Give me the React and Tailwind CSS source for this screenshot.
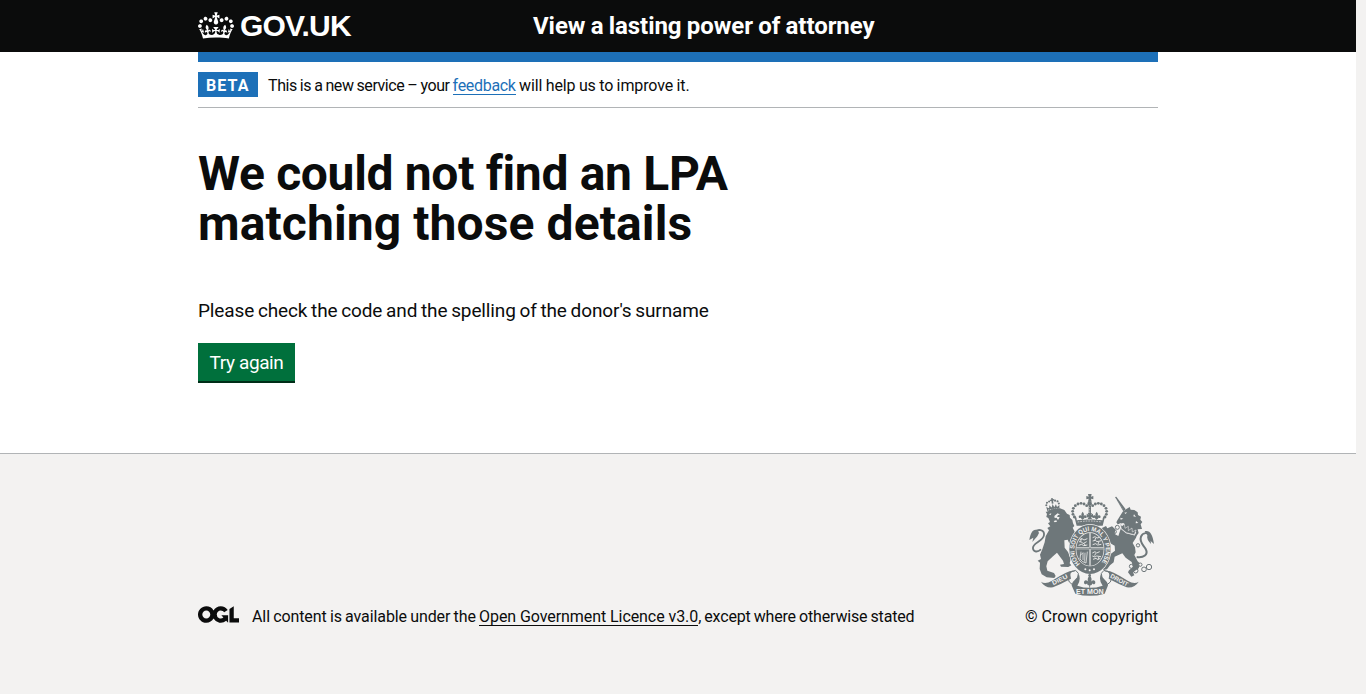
function Crown() {
  return (
    <svg aria-hidden="true" viewBox="0 0 132 97" className="mt-px h-[27px] w-9 shrink-0 fill-current">
      <path d="M25 30.2c3.5 1.5 7.7-.2 9.1-3.7 1.5-3.6-.2-7.8-3.9-9.2-3.6-1.4-7.6.3-9.1 3.9-1.4 3.5.3 7.5 3.9 9zM9 39.5c3.6 1.5 7.8-.2 9.2-3.7 1.5-3.6-.2-7.8-3.9-9.1-3.6-1.5-7.6.2-9.1 3.8-1.4 3.5.3 7.5 3.8 9zM4.4 57.2c3.5 1.5 7.7-.2 9.1-3.8 1.5-3.6-.2-7.7-3.9-9.1-3.5-1.5-7.6.3-9.1 3.8-1.4 3.5.3 7.6 3.9 9.1zm38.3-21.4c3.5 1.5 7.7-.2 9.1-3.8 1.5-3.6-.2-7.7-3.9-9.1-3.6-1.5-7.6.3-9.1 3.8-1.3 3.6.4 7.7 3.9 9.1zm64.4-5.6c-3.6 1.5-7.8-.2-9.1-3.7-1.5-3.6.2-7.8 3.8-9.2 3.6-1.4 7.7.3 9.2 3.9 1.3 3.5-.4 7.5-3.9 9zm15.9 9.3c-3.6 1.5-7.7-.2-9.1-3.7-1.5-3.6.2-7.8 3.7-9.1 3.6-1.5 7.7.2 9.2 3.8 1.5 3.5-.3 7.5-3.8 9zm4.7 17.7c-3.6 1.5-7.8-.2-9.2-3.8-1.5-3.6.2-7.7 3.9-9.1 3.6-1.5 7.7.3 9.2 3.8 1.3 3.5-.4 7.6-3.9 9.1zM89.3 35.8c-3.6 1.5-7.8-.2-9.2-3.8-1.4-3.6.2-7.7 3.9-9.1 3.6-1.5 7.7.3 9.2 3.8 1.4 3.6-.3 7.7-3.9 9.1zM69.7 17.7l8.9 4.7V9.3l-8.9 2.8c-.2-.3-.5-.6-.9-.9L72.4 0H59.6l3.5 11.2c-.3.3-.6.5-.9.9l-8.8-2.8v13.1l8.8-4.7c.3.3.6.7.9.9l-5 15.4v.1c-.2.8-.4 1.6-.4 2.4 0 4.1 3.1 7.5 7 8.1h.2c.3 0 .7.1 1 .1.4 0 .7 0 1-.1h.2c4-.6 7.1-4.1 7.1-8.1 0-.8-.1-1.7-.4-2.4V34l-5.1-15.4c.4-.2.7-.6 1-.9zM66 92.8c16.9 0 32.8 1.1 47.1 3.2 4-16.9 8.9-26.7 14-33.5l-9.6-3.4c1 4.9 1.1 7.2 0 10.2-1.5-1.4-3-4.3-4.2-8.7L108.6 76c2.8-2 5-3.2 7.5-3.3-4.4 9.4-10 11.9-13.6 11.2-4.3-.8-6.3-4.6-5.6-7.9 1-4.7 5.7-5.9 8-.5 4.3-8.7-3-11.4-7.6-8.8 7.1-7.2 7.9-13.5 2.1-21.1-8 6.1-8.1 12.3-4.5 20.8-4.7-5.4-12.1-2.5-9.5 6.2 3.4-5.2 7.9-2 7.2 3.1-.6 4.3-6.4 7.8-13.5 7.2-10.3-.9-10.9-8-11.2-13.8 2.5-.5 7.1 1.8 11 7.3L80.2 60c-4.1 4.4-8 5.3-12.3 5.4 1.4-4.4 8-11.6 8-11.6H55.5s6.4 7.2 7.9 11.6c-4.2-.1-8-1-12.3-5.4l1.4 16.4c3.9-5.5 8.5-7.7 10.9-7.3-.3 5.8-.9 12.8-11.1 13.8-7.2.6-12.9-2.9-13.5-7.2-.7-5 3.8-8.3 7.1-3.1 2.7-8.7-4.6-11.6-9.4-6.2 3.7-8.5 3.6-14.7-4.6-20.8-5.8 7.6-5 13.9 2.2 21.1-4.7-2.6-11.9.1-7.7 8.8 2.3-5.5 7.1-4.2 8.1.5.7 3.3-1.3 7.1-5.7 7.9-3.5.7-9-1.8-13.5-11.2 2.5.1 4.7 1.3 7.5 3.3l-4.7-15.4c-1.2 4.4-2.7 7.2-4.3 8.7-1.1-3-.9-5.3 0-10.2l-9.5 3.4c5 6.9 9.9 16.7 14 33.5 14.8-2.1 30.8-3.2 47.7-3.2z" />
    </svg>
  );
}

function LicenceLogo() {
  return (
    <svg aria-hidden="true" viewBox="0 0 483.2 195.7" className="mb-0.5 h-[17px] w-[41px] shrink-0 fill-current">
      <path d="M421.5 142.8V.1l-50.7 32.3v161.1h112.4v-50.7zm-122.3-9.6A47.12 47.12 0 0 1 221 97.8c0-26 21.1-47.1 47.1-47.1 16.7 0 31.4 8.7 39.7 21.8l42.7-27.2A97.63 97.63 0 0 0 268.1 0c-36.5 0-68.3 20.1-85.1 49.7A98 98 0 0 0 97.8 0C43.9 0 0 43.9 0 97.8s43.9 97.8 97.8 97.8c36.5 0 68.3-20.1 85.1-49.7a97.76 97.76 0 0 0 149.6 25.4l19.4 22.2h3v-87.8h-80l24.3 27.5zM97.8 145c-26 0-47.1-21.1-47.1-47.1s21.1-47.1 47.1-47.1 47.1 21.1 47.1 47.1S123.8 145 97.8 145" />
    </svg>
  );
}

function Fleur({ x, y, s = 1 }) {
  return (
    <g transform={`translate(${x} ${y}) scale(${s})`}>
      <path d="M0-12C6-5 5 0 2 5c4-8 12-6 11 1-1 4-6 4-7 1 0 4-3 5-5 5v5h-2v-5c-2 0-5-1-5-5-1 3-6 3-7-1C-14-1-6-3-2 5-5 0-6-5 0-12z" />
    </g>
  );
}

const pearls = [
  [178, 96], [174, 88], [173, 79], [175, 70], [181, 62], [189, 57], [198, 55], [207, 57], [215, 62],
  [270, 96], [274, 88], [275, 79], [273, 70], [267, 62], [259, 57], [250, 55], [241, 57], [233, 62],
];

function RoyalArms() {
  const dark = "#6e777a";
  const light = "#f3f2f1";
  return (
    <svg aria-hidden="true" viewBox="42 27 375 306" className="h-[102px] w-[125px]" fill={dark}>
      {/* lion: crown */}
      <g transform="rotate(-8 113 60)">
        <path d="M95 78l-2-15 8 5 2-9 6 8 4-10 4 10 6-8 2 9 8-5-2 15z" />
        <g>
          <circle cx="94" cy="58" r="3.2" />
          <circle cx="97" cy="51" r="3.2" />
          <circle cx="104" cy="48" r="3.2" />
          <circle cx="122" cy="48" r="3.2" />
          <circle cx="129" cy="51" r="3.2" />
          <circle cx="132" cy="58" r="3.2" />
        </g>
        <path d="M111 39h5v17h-5zM107 43h13v4h-13z" />
        <path d="M97 73h32" stroke={light} strokeWidth="2" strokeDasharray="4 2" />
      </g>
      {/* lion: head, mane and body */}
      <path d="M97 80l14-7 24-3 13 5 8 11 8 4 1 8 7 7 2 10 4 8-5 5 8 16-4 8 7 9-8 4 7 13-6 9-10-3-9-20-10 2 1 22 10 13 8 21-3 13 5 6-9 5-22-1-3-6 12-2-3-10-18-24-12 11-16 15-4 15 3 13 20 7 5 9-4 6-23-2-15-9-6-16 1-19-7-6 10-5-3-13 7-16 7-21 3-18 10-18-5-7 9-5-7-9 6-4-5-12-6-3 2-9-4-7z" />
      <path d="M118 93l10-8 7 4-6 1-3 5 8 2-5 8-4-7-6 1z M101 88l8-3-2 5z" fill={light} />
      <path d="M116 108l8-2 2 4-7 2z" fill={light} />
      {/* lion: tail */}
      <path d="M78 193c-11 10-22 8-24-2-4-18 31-21 33-41 2-17-20-19-28-8" fill="none" stroke={dark} strokeWidth="5.5" />
      <path d="M69 137c-13-8-22 4-26 28l12-7-3 13 15-17 5-10z" />
      {/* unicorn: horn, head and body */}
      <path d="M300 36l4-1 28 38-7 6z" />
      <path d="M303 42l22 31" stroke={light} strokeWidth="1.2" strokeDasharray="2 5" />
      <path d="M323 80l10-7 11-7 3 8 11 1 10 7 1 8 9 5-2 9 6 7-5 7 4 14-13 1 3 11-6 8-11-5-14-3-10-7-5-8 3-12-3-3-17 4-4-6 4-8z" />
      <path d="M328 83l8-1-4 5z M316 98l9 3-8 3z M357 88l6 8-8-2z M363 108l7 6-8 1z" fill={light} />
      <path d="M318 129l19 8 29 12-3 9-10 16 7 13 2 15-4 8 10 19 8 7-5 14-17 12 4 9-9 4-10-13 3-6 12-10-4-15-18-13-10-13-23 10-3 17-11 9-9 12-10 2-6-8 12-8 6-10 2-17 20-15-1-15-13-7-15 3-4-10 10-18-12-6-4-15 12-6 4 7 14-6 10 9-2 14 11 6z" />
      {/* unicorn: coronet collar and chain */}
      <path d="M316 119l5 13 13 11 24 6 4-8" fill="none" stroke={light} strokeWidth="4" />
      <path d="M315 114l6 9 7-6 2 13 10-6 0 13 11-8 1 12 11-6-5 14-24-6-15-12z" stroke={light} strokeWidth="1.6" />
      <g fill="none" stroke={dark} strokeWidth="3">
        <circle cx="307" cy="127" r="6" />
        <circle cx="298" cy="140" r="6" />
        <circle cx="369" cy="181" r="5" fill={light} />
        <circle cx="349" cy="244" r="6" />
        <circle cx="362" cy="257" r="7" />
        <circle cx="376" cy="239" r="5" fill={light} />
        <circle cx="387" cy="253" r="7" />
        <circle cx="402" cy="246" r="8" />
      </g>
      {/* unicorn: tail */}
      <path d="M365 216c21 3 36-7 27-24-7-12-20-21-14-37 5-13 21-14 28-4" fill="none" stroke={dark} strokeWidth="6" />
      <path d="M389 139c14-5 24 8 28 38l-10-9 1 9c-9-8-13-17-11-26z" />

      {/* royal crown */}
      {pearls.map(([x, y]) => (
        <circle key={`${x}-${y}`} cx={x} cy={y} r="4.3" />
      ))}
      <path d="M219 27h11l-2 8 7-2v10l-7-2 2 9h-11l2-9-7 2V33l7 2z" />
      <circle cx="224" cy="56" r="7" />
      <path d="M221 63h7v25h-7z" />
      <path d="M224 67v20" stroke={light} strokeWidth="2" strokeDasharray="2 3" />
      <Fleur x={203} y={91} s={0.9} />
      <Fleur x={245} y={91} s={0.9} />
      <path d="M218 84h13l-3 5 6-3v12l-6-3 3 7h-13l3-7-6 3V86l6 3z" />
      <path d="M177 91c10 5 8 15 8 15s35-6 78 0c0 0-2-10 8-15l-8 31h-78z" />
      <path d="M188 111q36-6 72 0" fill="none" stroke={light} strokeWidth="2" strokeDasharray="5 3" />

      {/* garter and quartered shield */}
      <ellipse cx="225" cy="193" rx="64" ry="76" fill={light} />
      <ellipse cx="225" cy="193" rx="62" ry="74" />
      <ellipse cx="225" cy="193" rx="43" ry="51" fill={light} />
      <ellipse cx="225" cy="193" rx="41" ry="49" />
      <path id="garter-motto" d="M195 237A47 56 0 1 1 255 237" fill="none" />
      <text fill={light} className="font-['Liberation_Sans'] text-[19px] font-bold">
        <textPath href="#garter-motto" textLength="250" lengthAdjust="spacingAndGlyphs">HONI SOIT QUI MAL Y PENSE</textPath>
      </text>
      <path d="M225 144v98M184 190h82" stroke={light} strokeWidth="6" />
      <path d="M225 144v98M184 190h82" stroke={dark} strokeWidth="2.5" />
      <g fill="none" stroke={light} strokeWidth="2.6">
        <path d="M194 164l7-3 6 4 10-4M192 170l8 1 4 5 11-6M191 181l9-3 6 4 11-2M199 160l-2 10M208 176l3 7" />
        <path d="M232 204l8-4 5 4 9-4M232 213l8 3 5-3 13 2M234 223l9-3 5 4 8-4M242 205l-3 7M252 215l-3 8" />
        <path d="M233 158l7-3 6 4 8-2M233 168l8-2 5 4 13-3M233 179l9-3 6 4 11-2M242 159l-3 8M252 170l-3 7" />
        <path d="M198 200l-3 22q7 10 18 12l4-34M204 203v22M210 203l-1 27M196 211l8-8" strokeWidth="2.2" />
      </g>
      <g fill={light}>
        <circle cx="211" cy="253" r="3" />
        <circle cx="224" cy="256" r="3" />
        <circle cx="237" cy="253" r="3" />
      </g>

      {/* scroll */}
      <path d="M161 268l6-8 15-4 8 9-2 13-9 12-5 10-11-9-4-11z" fill={light} stroke={dark} strokeWidth="3" />
      <path d="M288 268l-6-8-15-4-8 9 2 13 9 12 5 10 11-9 4-11z" fill={light} stroke={dark} strokeWidth="3" />
      <path d="M78 290q13 9 33-3 23-15 42-24 20-10 29-3-22-2-14 21l-6 3q-26 14-48 23-24 3-36-17z" />
      <path d="M371 290q-13 9-33-3-23-15-42-24-20-10-29-3 22-2 14 21l6 3q26 14 48 23 24 3 36-17z" />
      <path d="M171 304q-4-9 8-19 11-9 12-19 8 18-4 36 37 13 76 0-13-17-5-36 1 10 12 19 12 10 8 19l-9 22q-44 13-88 0z" />
      <Fleur x={224} y={286} s={1.3} />
      <circle cx="224" cy="271" r="4" />
      <g fill={light} className="font-['Liberation_Sans'] text-[18px] font-bold">
        <text transform="translate(115 301) rotate(-27)" textLength="50" lengthAdjust="spacingAndGlyphs">DIEU</text>
        <text transform="translate(284 277) rotate(28)" textLength="59" lengthAdjust="spacingAndGlyphs">DROIT</text>
        <text x="183" y="326" textLength="83" lengthAdjust="spacingAndGlyphs" className="text-[19px]">ET MON</text>
      </g>
    </svg>
  );
}

export default function App() {
  return (
    <div className="min-h-[694px] bg-[#f3f2f1] pr-2.5 font-['Roboto',sans-serif] text-[#0b0c0c]">
      <header className="h-[52px] bg-[#0b0c0c] text-white">
        <div className="mx-auto flex w-[960px] pt-[11px]">
          <a className="flex w-[335px] items-start gap-1.5">
            <Crown />
            <span className="font-['Liberation_Sans',sans-serif] text-[30px] leading-[29px] font-bold tracking-[-0.8px]">GOV.UK</span>
          </a>
          <a className="text-2xl leading-[30px] font-bold tracking-[-0.06px] [word-spacing:-0.6px]">View a lasting power of attorney</a>
        </div>
      </header>

      <div className="h-[402px] border-b border-[#b1b4b6] bg-white">
        <div className="mx-auto w-[960px]">
          <div className="h-2.5 bg-[#1d70b8]" />
          <div className="flex h-[46px] items-start border-b border-[#b1b4b6] pt-2.5">
            <strong className="h-[25px] w-[60px] bg-[#1d70b8] pt-1 pl-2 text-base leading-5 font-bold tracking-[1.1px] text-white">BETA</strong>
            <p className="ml-2.5 pt-1 text-base leading-5 whitespace-pre">
              <span className="tracking-[-0.42px] [word-spacing:-0.55px]">This is a new service – your </span>
              <a className="inline-block h-[19px] border-b border-[#1d70b8] tracking-[-0.31px] text-[#1d70b8]">feedback</a>
              <span className="tracking-[-0.12px] [word-spacing:-0.4px]"> will help us to improve it.</span>
            </p>
          </div>

          <main className="pt-[41px]">
            <h1 className="text-5xl leading-[50px] font-bold">
              <span className="tracking-[-0.33px]">We could not find an LPA</span>
              <br />
              <span className="tracking-[0.1px]">matching those details</span>
            </h1>
            <p className="mt-[49px] text-[19px] leading-[25px] tracking-[-0.13px] [word-spacing:-0.8px]">
              Please check the code and the spelling of the donor's surname
            </p>
            <a className="mt-5 flex h-10 w-[97px] justify-center border-b-2 border-[#002d18] bg-[#00703c] pt-2.5 text-[19px] leading-[19px] tracking-[-0.4px] text-white">
              Try again
            </a>
          </main>
        </div>
      </div>

      <footer className="mx-auto flex w-[960px] items-end justify-between pt-10">
        <div className="flex items-center">
          <LicenceLogo />
          <p className="mt-1 ml-[13px] text-base leading-5 whitespace-pre">
            <span className="tracking-[-0.1px] [word-spacing:-0.6px]">All content is available under the </span>
            <a className="inline-block h-[19px] border-b border-[#0b0c0c] tracking-[-0.075px]">Open Government Licence v3.0</a>
            <span className="tracking-[-0.18px] [word-spacing:-0.6px]">, except where otherwise stated</span>
          </p>
        </div>
        <div className="flex w-[133px] flex-col items-center">
          <RoyalArms />
          <a className="mt-[11px] text-base leading-5 whitespace-nowrap tracking-[0.03px]">© Crown copyright</a>
        </div>
      </footer>
    </div>
  );
}
